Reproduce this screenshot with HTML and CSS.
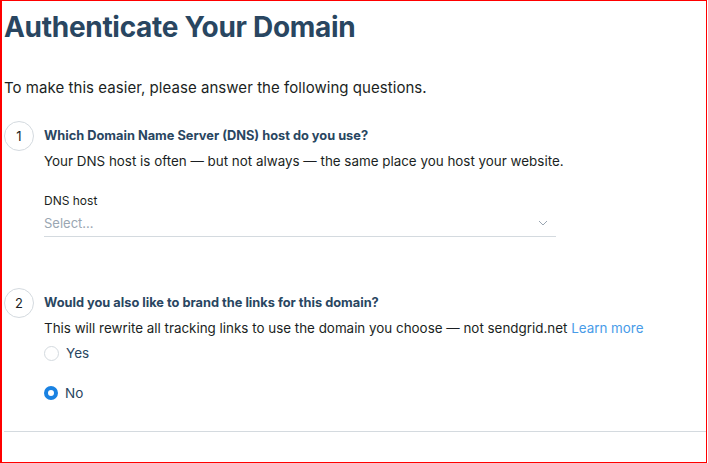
FILE: index.html
```html
<!DOCTYPE html>
<html lang="en">
<head>
    <meta charset="UTF-8">
    <title>Authenticate Your Domain</title>
    <link rel="stylesheet" href="styles.css">
</head>
<body>
    <div class="frame">
        <h1 class="title">Authenticate Your Domain</h1>
        <p class="intro">To make this easier, please answer the following questions.</p>

        <section class="step">
            <div class="step-num">1</div>
            <div class="step-body">
                <h2 class="step-title">Which Domain Name Server (DNS) host do you use?</h2>
                <p class="step-text">Your DNS host is often — but not always — the same place you host your website.</p>
                <div class="field">
                    <label class="field-label">DNS host</label>
                    <div class="select">
                        <span class="select-placeholder">Select...</span>
                        <svg class="chevron" width="10" height="6" viewBox="0 0 10 6"><path d="M1 1l4 4 4-4" fill="none" stroke="#9aa6b2" stroke-width="1"/></svg>
                    </div>
                </div>
            </div>
        </section>

        <section class="step step-two">
            <div class="step-num">2</div>
            <div class="step-body">
                <h2 class="step-title">Would you also like to brand the links for this domain?</h2>
                <p class="step-text">This will rewrite all tracking links to use the domain you choose — not sendgrid.net <a href="#" class="link">Learn more</a></p>
                <label class="radio"><span class="radio-dot"></span>Yes</label>
                <label class="radio"><span class="radio-dot checked"></span>No</label>
            </div>
        </section>

        <hr class="divider">
    </div>
</body>
</html>
```

FILE: styles.css
```css
body {
    margin: 0;
    font-family: Inter, "Noto Sans", sans-serif;
    color: #263238;
    background-color: #fff;
}
.frame {
    width: 707px;
    height: 463px;
    box-sizing: border-box;
    border: 1px solid #f00;
    border-left-width: 2px;
    padding: 0 0 0 2px;
    overflow: hidden;
}
.title {
    margin: 8px 0 0 0;
    font-size: 28px;
    font-weight: 700;
    color: #294661;
    letter-spacing: -0.3px;
    line-height: 36px;
}
.intro {
    margin: 33px 0 0 0;
    font-size: 15px;
    line-height: 20px;
    color: #1b1f23;
    letter-spacing: 0.05px;
}
.step {
    display: flex;
    margin-top: 22px;
}
.step-num {
    width: 28px;
    height: 28px;
    flex: none;
    border: 1px solid #d4dadf;
    border-radius: 50%;
    display: flex;
    align-items: center;
    justify-content: center;
    font-size: 13px;
    color: #1b1f23;
    margin-top: 1px;
}
.step-body {
    margin-left: 10px;
    flex: 1;
}
.step-title {
    margin: 7px 0 0 0;
    font-size: 12.8px;
    font-weight: 700;
    color: #294661;
    line-height: 18px;
}
.step-text {
    margin: 6px 0 0 0;
    font-size: 13.4px;
    line-height: 20px;
    color: #1b1f23;
}
.field {
    margin-top: 22px;
    width: 512px;
}
.field-label {
    display: block;
    font-size: 12px;
    line-height: 16px;
    color: #1b1f23;
}
.select {
    display: flex;
    align-items: center;
    justify-content: space-between;
    height: 27px;
    border-bottom: 1px solid #d4dadf;
}
.select-placeholder {
    font-size: 13px;
    color: #9aa6b2;
}
.chevron {
    margin-right: 8px;
}
.step-two {
    margin-top: 50px;
}
.link {
    color: #489be8;
    text-decoration: none;
}
.radio {
    display: flex;
    align-items: center;
    font-size: 13.5px;
    color: #294661;
    height: 18px;
    margin-top: 6px;
}
.radio + .radio {
    margin-top: 22px;
}
.radio-dot {
    width: 13px;
    height: 13px;
    border: 1px solid #d4dadf;
    border-radius: 50%;
    margin-right: 7px;
    box-sizing: content-box;
}
.radio-dot.checked {
    border: 4px solid #1a82e2;
    width: 6px;
    height: 6px;
    background-color: #fff;
}
.divider {
    margin: 29px 0 0 0;
    border: none;
    border-top: 1px solid #d4dadf;
}
```
